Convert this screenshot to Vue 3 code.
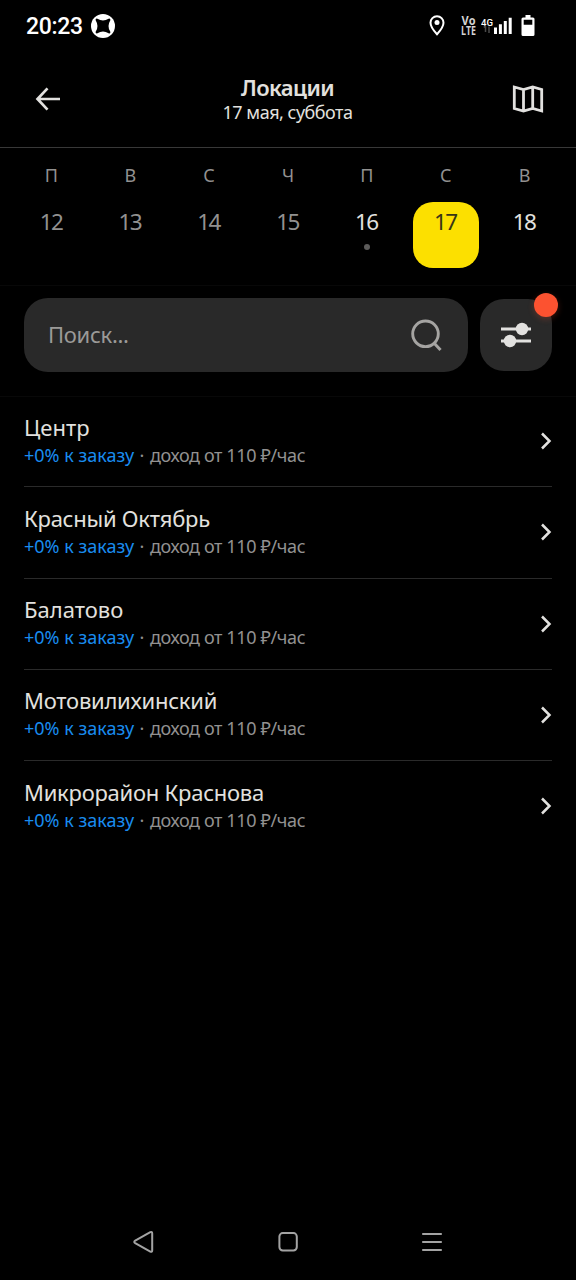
<script setup>
const days = [
  { label: 'П', date: 12 },
  { label: 'В', date: 13 },
  { label: 'С', date: 14 },
  { label: 'Ч', date: 15 },
  { label: 'П', date: 16, open: true, dot: true },
  { label: 'С', date: 17, selected: true },
  { label: 'В', date: 18, open: true },
]
const places = [
  { name: 'Центр', cls: 'wide' },
  { name: 'Красный Октябрь', cls: 'tight' },
  { name: 'Балатово', cls: 'wide' },
  { name: 'Мотовилихинский', cls: 'tight' },
  { name: 'Микрорайон Краснова', cls: 'tight' },
]
</script>

<template>
  <div class="screen">
    <div class="status">
      <span class="clock">20:23</span>
      <svg class="app-badge" width="24" height="24" viewBox="0 0 24 24">
        <circle cx="12" cy="12" r="12" fill="#fff" />
        <path d="M5.800 5.800Q12 9.600 18.200 5.800Q14.400 12 18.200 18.200Q12 14.400 5.800 18.200Q9.600 12 5.800 5.800Z" fill="#000" stroke="#000" stroke-width="2.400" stroke-linejoin="round" />
      </svg>
      <span class="grow"></span>
      <svg class="pin" width="16" height="22" viewBox="0 0 16 22">
        <path d="M8 1.200A6.500 6.500 0 0 0 1.500 7.700C1.500 12.200 8 19.200 8 19.200S14.500 12.200 14.500 7.700A6.500 6.500 0 0 0 8 1.200Z" fill="none" stroke="#fff" stroke-width="2" />
        <circle cx="8" cy="7.600" r="2.500" fill="#fff" />
      </svg>
      <svg class="volte" width="18" height="36" viewBox="0 -2 18 36">
        <text x="0.500" y="14.600" textLength="14" lengthAdjust="spacingAndGlyphs">Vo</text>
        <text x="0" y="25" textLength="15" lengthAdjust="spacingAndGlyphs">LTE</text>
      </svg>
      <svg class="signal" width="31" height="20" viewBox="0 0 31 20">
        <text x="0" y="9.500" class="net" textLength="12" lengthAdjust="spacingAndGlyphs">4G</text>
        <path d="M4.500 16V10M2.800 11.500L4.500 9.800M8 10.500V17" fill="none" stroke="#4a4a4a" stroke-width="1.500" />
        <path d="M13 18v-6.500h3v6.500zM17.900 18v-9.800h3v9.800zM22.800 18v-13h3v13zM27.700 18v-16.200h3v16.200z" fill="#fff" />
      </svg>
      <svg class="battery" width="14" height="22" viewBox="0 0 14 22">
        <path fill-rule="evenodd" d="M4.500 0h5v2.500h2.500q1.500 0 1.500 1.500v15.500q0 1.500-1.500 1.500h-10q-1.500 0-1.500-1.500v-15.500q0-1.500 1.500-1.500h2.500zM2.700 4.800v5h8.600v-5z" fill="#fff" />
      </svg>
    </div>

    <header class="header">
      <svg class="back" width="26" height="26" viewBox="0 0 26 26">
        <path d="M12.500 2.300L2.500 13L12.500 23.700M3 13H25" fill="none" stroke="#e2e1df" stroke-width="2.700" />
      </svg>
      <div class="heading">
        <span class="title">Локации</span>
        <span class="subtitle">17 мая, суббота</span>
      </div>
      <svg class="map" width="32" height="30" viewBox="0 0 32 30">
        <path d="M2.300 3L11.500 5.500L20.700 3L29.700 5.500V27L20.700 24.500L11.500 27L2.300 24.500ZM11.500 5.500V27M20.700 3V24.500" fill="none" stroke="#e2e1df" stroke-width="2.800" />
      </svg>
    </header>

    <div class="week">
      <div v-for="d in days" :key="d.date" class="day">
        <span class="wd">{{ d.label }}</span>
        <div class="cell" :class="{ open: d.open, selected: d.selected }">
          <span class="num">{{ d.date }}</span>
          <i v-if="d.dot" class="dot"></i>
        </div>
      </div>
    </div>

    <div class="tools">
      <div class="search">
        <span class="placeholder">Поиск...</span>
        <svg width="34" height="34" viewBox="0 0 34 34">
          <circle cx="16.500" cy="15.800" r="12.800" fill="none" stroke="#a5a4a2" stroke-width="2.900" />
          <path d="M25 25L31.500 32" stroke="#a5a4a2" stroke-width="3" />
        </svg>
      </div>
      <div class="filter">
        <svg width="30" height="26" viewBox="0 0 30 26">
          <path d="M0 7H30M0 19H30" stroke="#e2e1df" stroke-width="2.900" />
          <circle cx="21" cy="7" r="6.200" fill="#e2e1df" />
          <circle cx="9" cy="19" r="6.200" fill="#e2e1df" />
        </svg>
        <i class="badge"></i>
      </div>
    </div>

    <div class="list">
      <div v-for="p in places" :key="p.name" class="row">
        <div class="info">
          <span class="name" :class="p.cls">{{ p.name }}</span>
          <span class="meta"><span class="bonus">+0% к заказу</span><span class="sep">·</span><span class="income">доход от 110 ₽/час</span></span>
        </div>
        <svg class="chev" width="12" height="18" viewBox="0 0 12 18">
          <path d="M2 1.500L9.500 9L2 16.500" fill="none" stroke="#e2e1df" stroke-width="2.500" />
        </svg>
      </div>
    </div>

    <nav class="nav">
      <svg width="24" height="24" viewBox="0 0 24 24">
        <path d="M3.200 10.700L18.300 2.200Q20.200 1.400 20.200 3.400V20.400Q20.200 22.400 18.300 21.600L3.200 13.100Q1.300 11.900 3.200 10.700Z" fill="none" stroke="#a3a3a3" stroke-width="2" />
      </svg>
      <svg width="24" height="24" viewBox="0 0 24 24">
        <rect x="3.400" y="3.100" width="17.400" height="17.400" rx="3.400" fill="none" stroke="#a3a3a3" stroke-width="2" />
      </svg>
      <svg width="24" height="24" viewBox="0 0 24 24">
        <path d="M2.200 4H21.800M2.200 12H21.800M2.200 20H21.800" stroke="#a3a3a3" stroke-width="2" />
      </svg>
    </nav>
  </div>
</template>

<style>
body { background: #000; }
</style>

<style scoped>
.screen {
  width: 576px;
  height: 1280px;
  background: #000;
  color: #e2e1df;
  font-family: "Noto Sans", "Open Sans", sans-serif;
  display: flex;
  flex-direction: column;
  overflow: hidden;
  white-space: nowrap;
}
svg { display: block; flex: none; }
.status {
  height: 52px;
  padding: 0 41px 0 26px;
  display: flex;
  align-items: center;
  box-sizing: border-box;
  color: #fff;
}
.clock { font: 500 23px/28px Roboto, sans-serif; letter-spacing: -0.3px; width: 57px; margin-top: 2px; }
.app-badge { margin-left: 8px; }
.grow { flex: 1; }
.volte {
  overflow: visible;
  margin: 0 2px 0 16px;
  font: 700 12.5px "Open Sans", sans-serif;
  fill: #d4d4d4;
}
.signal { margin-right: 9px; }
.net { font: 500 9.5px Roboto, sans-serif; fill: #fff; }
.header {
  height: 95px;
  box-sizing: content-box;
  display: flex;
  align-items: center;
  justify-content: space-between;
  padding: 0 32px 0 35px;
  border-bottom: 1px solid #383838;
}
.back, .map { margin-bottom: 1px; }
.heading {
  display: flex;
  flex-direction: column;
  align-items: center;
  padding: 0 0 0 2px;
}
.title { font-size: 22px; font-weight: 600; line-height: 25px; letter-spacing: -0.6px; }
.subtitle { font-size: 18px; line-height: 24px; letter-spacing: -0.5px; }
.week {
  height: 138px;
  padding: 0 12px;
  display: grid;
  grid-template-columns: repeat(7, 1fr);
  border-bottom: 1px solid #080808;
  box-sizing: border-box;
}
.day { display: flex; flex-direction: column; align-items: center; padding-top: 14px; }
.wd { font-size: 18px; line-height: 26px; color: #929190; }
.cell {
  width: 66px;
  height: 66px;
  margin-top: 14px;
  border-radius: 20px;
  display: flex;
  flex-direction: column;
  align-items: center;
  color: #929190;
}
.open { color: #e2e1df; }
.selected { background: #fce000; color: #383517; }
.num { font-size: 22.5px; line-height: 30px; margin-top: 5px; letter-spacing: -1.6px; padding-right: 1px; }
.dot { width: 6px; height: 6px; border-radius: 50%; background: #5c5b5a; margin-top: 7px; }
.tools {
  height: 111px;
  padding: 12px 24px 0;
  display: flex;
  gap: 12px;
  border-bottom: 1px solid #080808;
  box-sizing: border-box;
}
.search {
  flex: 1;
  height: 74px;
  border-radius: 24px;
  background: #292929;
  display: flex;
  align-items: center;
  justify-content: space-between;
  padding: 0 25px 0 24px;
}
.placeholder { font-size: 22px; color: #9b9a98; letter-spacing: -0.3px; padding-bottom: 2px; }
.filter {
  width: 72px;
  height: 72px;
  margin-top: 1px;
  border-radius: 24px;
  background: #292929;
  display: flex;
  align-items: center;
  justify-content: center;
  position: relative;
}
.badge {
  position: absolute;
  top: -6px;
  right: -6px;
  width: 24px;
  height: 24px;
  border-radius: 50%;
  background: #fc5230;
  box-shadow: 0 2px 6px rgba(252, 82, 48, 0.25);
}
.list { padding: 0 24px; margin-top: -0.8px; }
.row {
  height: 91.2px;
  box-sizing: border-box;
  border-bottom: 1px solid #2a2a2a;
  display: flex;
  justify-content: space-between;
  align-items: center;
}
.row:last-child { border-color: #000; }
.info { display: flex; flex-direction: column; align-items: flex-start; padding-top: 1px; }
.name { font-size: 22px; line-height: 27px; }
.tight { letter-spacing: -0.25px; }
.wide { letter-spacing: 0; }
.meta { font-size: 18px; line-height: 29px; display: flex; color: #929190; }
.bonus { color: #198cef; width: 110px; }
.sep { width: 16px; text-align: center; }
.income { letter-spacing: -0.38px; }
.nav {
  margin-top: auto;
  height: 76px;
  padding: 0 132px;
  display: flex;
  align-items: center;
  justify-content: space-between;
}
</style>
